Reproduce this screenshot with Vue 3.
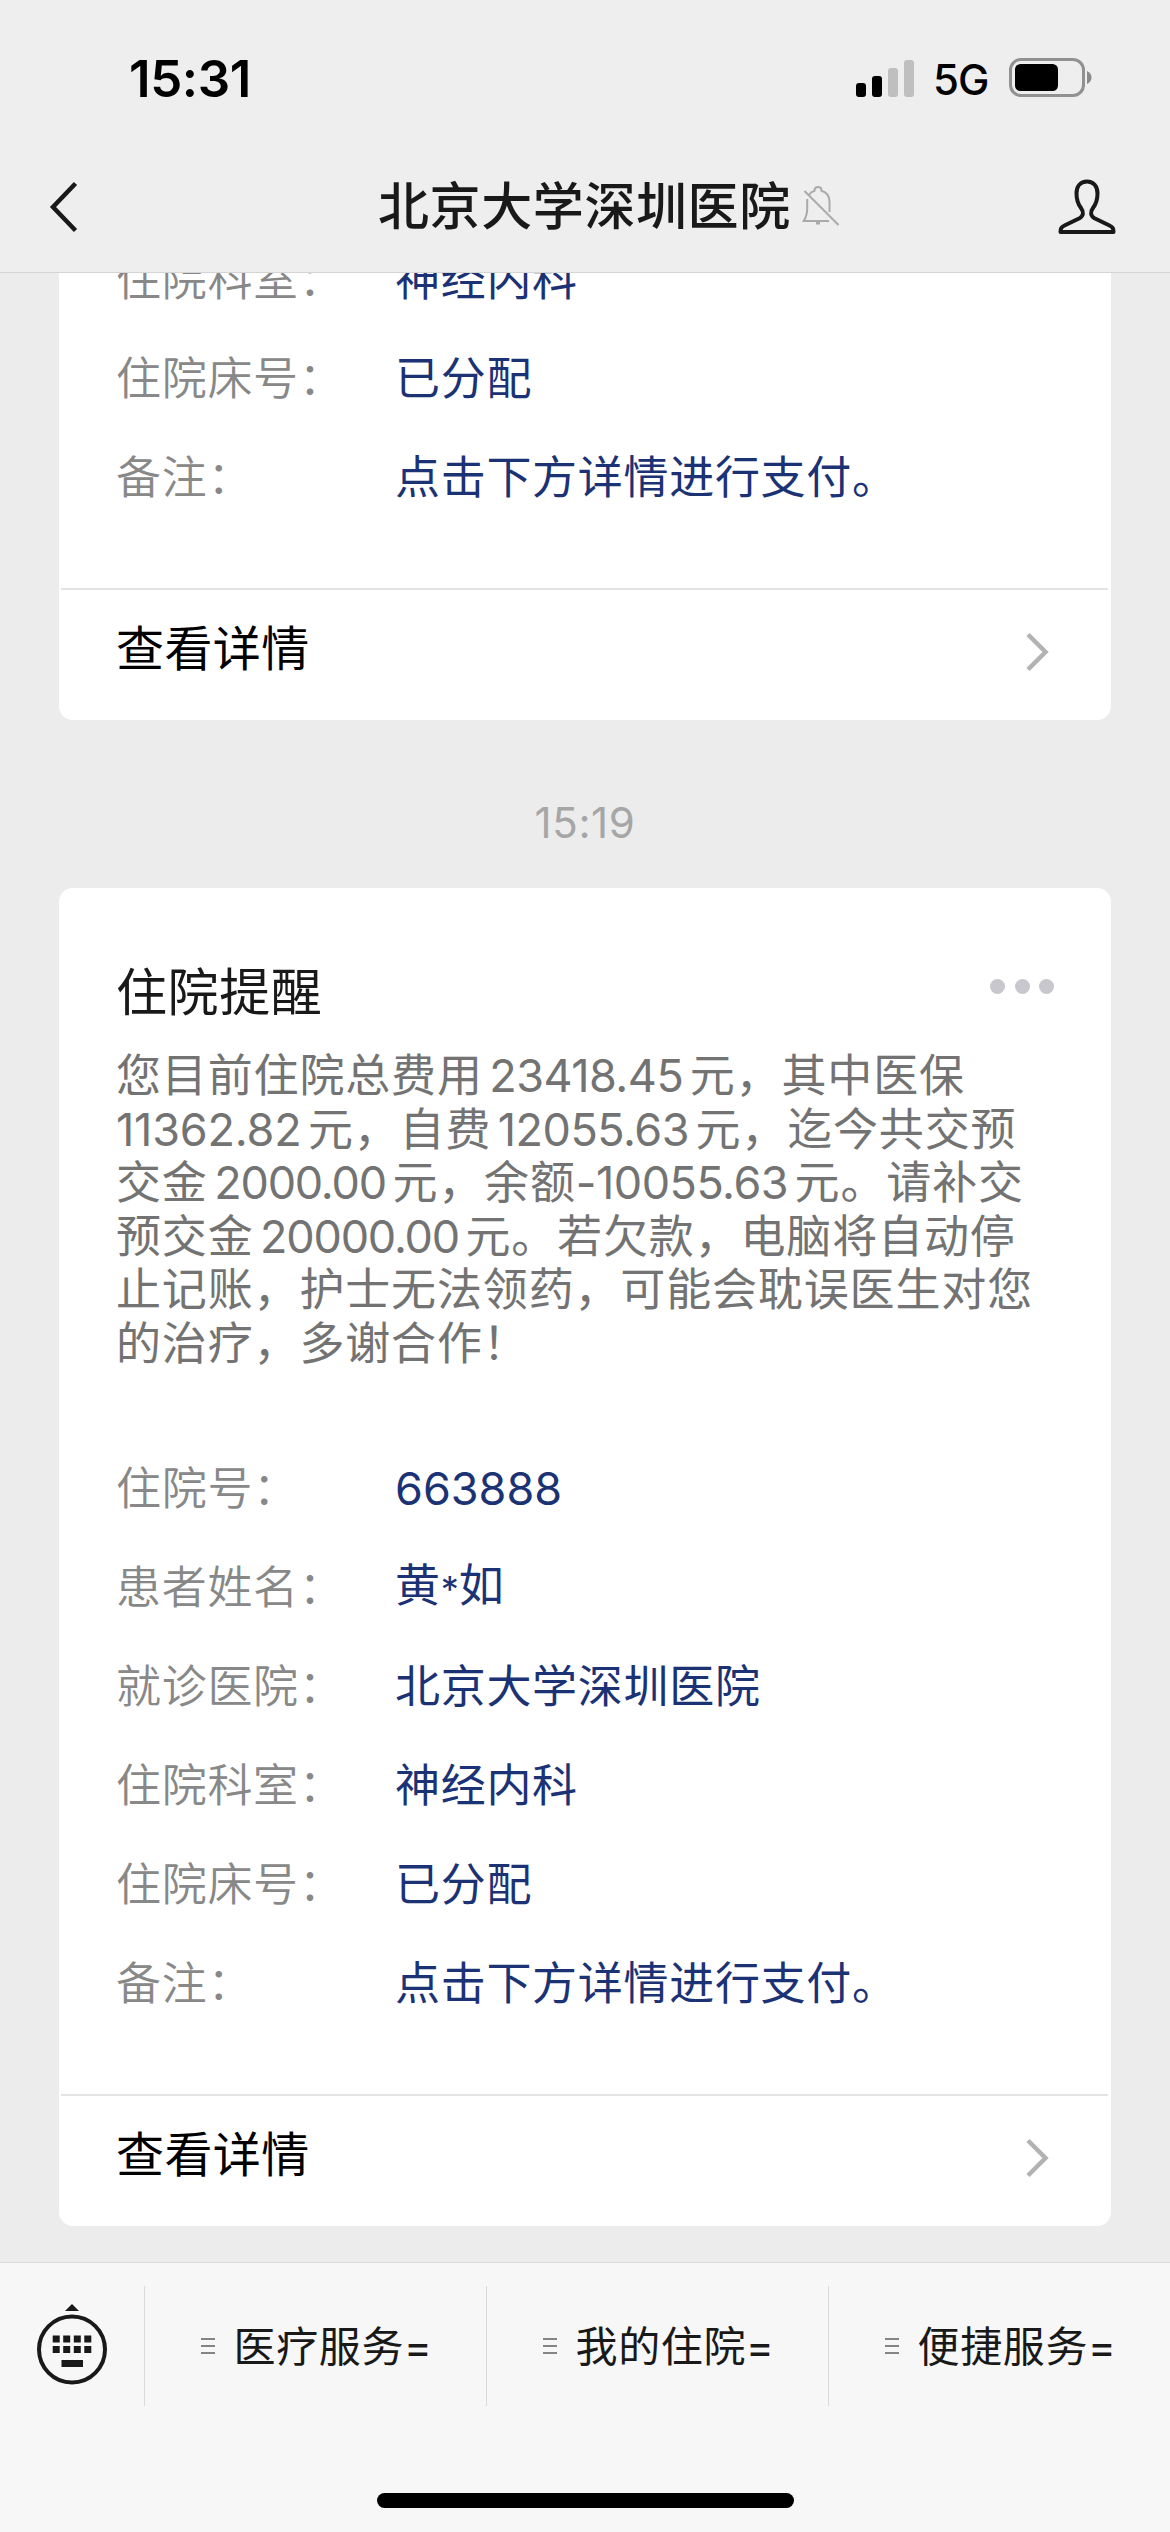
<script setup>
const lines = [
  ['您目前住院总费用', '#23418.45', '元，其中医保'],
  ['#11362.82', '元，自费', '#12055.63', '元，迄今共交预'],
  ['交金', '#2000.00', '元，余额', '-10055.63', '元。请补交'],
  ['预交金', '#20000.00', '元。若欠款，电脑将自动停'],
  ['止记账，护士无法领药，可能会耽误医生对您'],
  ['的治疗，多谢合作！'],
].map((line) =>
  line.map((s) => ({
    text: s.replace('#', ''),
    num: s[0] === '#',
    minus: s[0] === '-',
    round: s.endsWith('000.00'),
    narrow: s.startsWith('#11'),
  }))
)

const tail = [
  ['住院科室：', '神经内科'],
  ['住院床号：', '已分配'],
  ['备注：', '点击下方详情进行支付。'],
]
const fields = [
  ['住院号：', '663888'],
  ['患者姓名：', '黄*如'],
  ['就诊医院：', '北京大学深圳医院'],
  ...tail,
]
const menus = ['医疗服务=', '我的住院=', '便捷服务=']

// Digits and the masking asterisk are set tighter than Han characters.
const runs = (text) => text.match(/\d+|\*|[^\d*]+/g)
const runClass = (r) => (r === '*' ? 'star' : /\d/.test(r) ? 'digits' : '')
</script>

<template>
  <div class="screen">
    <header class="header">
      <div class="status">
        <span class="clock">15:31</span>
        <div class="status-right">
          <div class="signal"><i class="b1"></i><i class="b2"></i><i class="b3"></i><i class="b4"></i></div>
          <span class="net">5G</span>
          <svg class="battery" width="84" height="40" viewBox="0 0 84 40">
            <rect x="1.5" y="1.5" width="73" height="36" rx="10.5" fill="none" stroke="#919191" stroke-width="3" />
            <rect x="6" y="6" width="43" height="27" rx="5.5" fill="#000" />
            <path d="M78 13v13c3-1.500 4.500-3.500 4.500-6.500S81 14.500 78 13z" fill="#8a8a8a" />
          </svg>
        </div>
      </div>
      <div class="nav">
        <svg class="back" width="32" height="56" viewBox="0 0 32 56" fill="none" stroke="#191919" stroke-width="4.500">
          <path d="M27.500 4.500L5 28l22.500 23.500" />
        </svg>
        <div class="nav-title">
          <span>北京大学深圳医院</span>
          <svg class="bell" width="38" height="42" viewBox="0 0 38 42" fill="none" stroke="#aaa" stroke-width="2">
            <path d="M5.200 13v9.500c0 5-1 8.500-3.500 12.500H27" />
            <path d="M6.500 9.500c1.500-2.500 3.500-4 6-4.700C12.500 2.500 14 1 16 1s3.500 1.500 3.500 3.800c5 1.500 8 5.500 8 10.700V26" />
            <path d="M2.500 5l34 34" />
            <path d="M14 37h4" stroke-width="3" />
          </svg>
        </div>
        <svg class="person" width="60" height="58" viewBox="0 0 60 58" fill="none" stroke="#191919" stroke-width="4" stroke-linejoin="round">
          <path d="M30 3.500c-6.500 0-10.500 4.800-10.500 12 0 6.500 1.500 10.500 4.500 14.500 3 4 2.500 8-1.500 10.200L8 47.300c-4 2-4.500 3.200-4.500 6.700h53c0-3.500-.5-4.700-4.500-6.700l-14.500-7.100c-4-2.200-4.500-6.200-1.500-10.200 3-4 4.500-8 4.500-14.500 0-7.200-4-12-10.500-12z" />
        </svg>
      </div>
    </header>

    <main class="chat">
      <section class="card first">
        <div class="fields">
          <div v-for="f in tail" :key="f[0]" class="field">
            <span class="label">{{ f[0] }}</span><span class="value">{{ f[1] }}</span>
          </div>
        </div>
        <div class="more">
          <span>查看详情</span>
          <svg width="26" height="40" viewBox="0 0 26 40" fill="none" stroke="#b2b2b2" stroke-width="4.500"><path d="M3 2.500L20.500 20 3 37.500" /></svg>
        </div>
      </section>

      <div class="time">15:19</div>

      <section class="card second">
        <div class="card-head">
          <h2>住院提醒</h2>
          <div class="dots"><i></i><i></i><i></i></div>
        </div>
        <div class="para">
          <div v-for="(l, i) in lines" :key="i" class="line">
            <span
              v-for="(s, j) in l"
              :key="j"
              :class="{ num: s.num, minus: s.minus, round: s.round, narrow: s.narrow }"
            >{{ s.text }}</span>
          </div>
        </div>
        <div class="fields">
          <div v-for="f in fields" :key="f[0]" class="field">
            <span class="label">{{ f[0] }}</span>
            <span class="value"><span v-for="(r, k) in runs(f[1])" :key="k" :class="runClass(r)">{{ r }}</span></span>
          </div>
        </div>
        <div class="more">
          <span>查看详情</span>
          <svg width="26" height="40" viewBox="0 0 26 40" fill="none" stroke="#b2b2b2" stroke-width="4.500"><path d="M3 2.500L20.500 20 3 37.500" /></svg>
        </div>
      </section>
    </main>

    <footer class="footer">
      <div class="menubar">
        <div class="kbd">
          <svg width="72" height="82" viewBox="36 2303 72 82" fill="#191919">
            <path d="M72 2304l7 7H65z" />
            <circle cx="72" cy="2349.500" r="33" fill="none" stroke="#191919" stroke-width="4" />
            <path d="M52.700 2335.500h7v7h-7zM63.200 2335.500h7v7h-7zM73.800 2335.500h7v7h-7zM84.300 2335.500h7v7h-7zM52.700 2346h7v7h-7zM63.200 2346h7v7h-7zM73.800 2346h7v7h-7zM84.300 2346h7v7h-7zM61.500 2360h21.500v7H61.500z" />
          </svg>
        </div>
        <div v-for="m in menus" :key="m" class="menu">
          <div class="burger"><i></i><i></i><i></i></div>
          <span>{{ m }}</span>
        </div>
      </div>
      <div class="home"></div>
    </footer>
  </div>
</template>

<style>
body { margin: 0; }
</style>

<style scoped>
.screen {
  width: 1170px;
  height: 2532px;
  display: flex;
  flex-direction: column;
  overflow: hidden;
  background: #ececec;
  font-family: Inter, "Noto Sans CJK SC", sans-serif;
  color: #191919;
}
.header {
  box-sizing: border-box;
  height: 273px;
  flex: none;
  background: #eeeeee;
  border-bottom: 1px solid #d5d5d5;
}
.status {
  height: 156px;
  box-sizing: border-box;
  padding: 0 77px 0 129px;
  display: flex;
  justify-content: space-between;
  align-items: center;
  color: #000;
}
.clock { font-size: 51px; font-weight: 600; letter-spacing: -0.4px; }
.status-right { display: flex; align-items: center; }
.signal { display: flex; align-items: flex-end; gap: 6px; height: 37px; }
.signal i { width: 10px; border-radius: 3px; background: #000; }
.signal .b1 { height: 14px; }
.signal .b2 { height: 21px; }
.signal .b3 { height: 29px; background: #bfbfbf; }
.signal .b4 { height: 37px; background: #bfbfbf; }
.net { width: 57px; margin: 0 19px; font-size: 42px; font-weight: 500; letter-spacing: -1px; line-height: 40px; padding-top: 3px; }
.battery { display: block; }
.nav {
  height: 102px;
  padding: 0 54px 0 48px;
  display: grid;
  grid-template-columns: 330px 1fr 60px;
  align-items: center;
}
.back { display: block; }
.nav-title {
  display: flex;
  align-items: center;
  font-size: 51px;
  font-weight: 500;
  letter-spacing: 0.6px;
  line-height: 60px;
}
.bell { margin-left: 11px; }
.person { display: block; margin-left: 0.5px; }

.chat {
  height: 1989px;
  flex: none;
  display: flex;
  flex-direction: column;
  padding: 0 59px;
  overflow: hidden;
}
.card {
  background: #fff;
  border-radius: 14px;
  overflow: hidden;
  flex: none;
  display: flex;
  flex-direction: column;
}
.first {
  height: 447px;
  border-top-left-radius: 0;
  border-top-right-radius: 0;
  justify-content: flex-end;
}
.second { height: 1338px; }
.fields { padding: 0 57px; flex: none; }
.field { height: 99px; display: flex; align-items: center; font-size: 45px; letter-spacing: 0.7px; line-height: 60px; }
.label { width: 279px; flex: none; color: #888; font-weight: 350; }
.value { color: #1b3275; }
.digits { letter-spacing: 0; }
.star { font-size: 36px; letter-spacing: 0; }
.more {
  flex: none;
  box-sizing: border-box;
  margin: 61px 3px 0 2px;
  height: 132px;
  border-top: 2px solid #e3e3e3;
  padding: 0 57px 6px 55px;
  display: flex;
  align-items: center;
  justify-content: space-between;
  color: #000;
  font-size: 48px;
  letter-spacing: 0.4px;
}
.more span { margin-bottom: 14px; }
.time {
  height: 168px;
  flex: none;
  line-height: 205px;
  text-align: center;
  font-size: 42px;
  letter-spacing: 0.6px;
  color: #a6a6a6;
}
.card-head { height: 161px; flex: none; padding: 0 57px; display: flex; justify-content: space-between; align-items: flex-start; }
h2 { margin: 75px 0 0; font-size: 51px; font-weight: 400; letter-spacing: 0.6px; line-height: 60px; }
.dots { display: flex; gap: 9.5px; margin-top: 91px; }
.dots i { width: 15px; height: 15px; border-radius: 50%; background: #c8c7cd; }
.para { height: 390px; flex: none; padding: 0 57px; color: #737373; font-size: 45px; letter-spacing: 0.85px; }
.line { height: 53.6px; line-height: 53.6px; white-space: nowrap; display: flex; }
.num, .minus { margin: 0 6.5px; letter-spacing: -0.5px; }
.num:first-child, .minus { margin-left: 0; }
.round { letter-spacing: -1.2px; }
.narrow { letter-spacing: -0.2px; }

.footer {
  flex: 1;
  background: #f7f7f7;
  border-top: 1px solid #dbdbdb;
  display: flex;
  flex-direction: column;
  align-items: center;
}
.menubar { width: 100%; height: 120px; margin-top: 23px; display: flex; }
.kbd { width: 144px; display: flex; justify-content: center; align-items: flex-start; padding-top: 17px; box-sizing: border-box; }
.menu {
  flex: 1;
  box-sizing: border-box;
  border-left: 1px solid #dadada;
  padding-left: 2px;
  display: flex;
  align-items: center;
  justify-content: center;
  gap: 19px;
  font-size: 42px;
  letter-spacing: 0.6px;
}
.menu span { margin-bottom: 6px; }
.burger { display: flex; flex-direction: column; gap: 5px; width: 14px; }
.burger i { height: 2px; background: #858585; }
.home { width: 417px; height: 15px; border-radius: 8px; background: #000; margin-top: 87px; }
</style>
